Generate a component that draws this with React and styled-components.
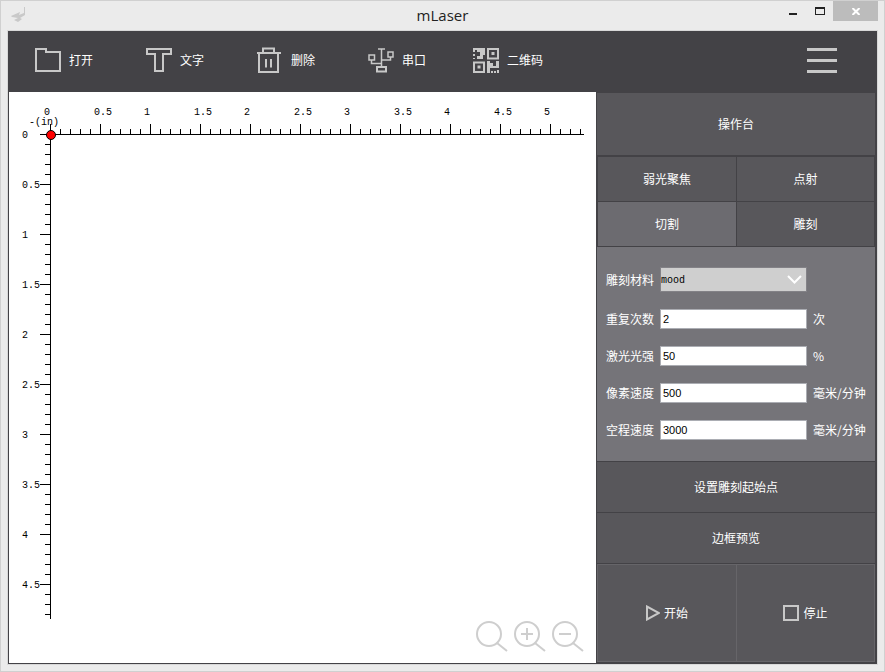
import React, { useState } from "react";
import styled, { createGlobalStyle } from "styled-components";

const c = {
  chrome: "#ebebeb",
  line: "#d0d0d0",
  dark: "#434246",
  panel: "#58575b",
  active: "#6c6b70",
  settings: "#757479",
  icon: "#c8c8c8",
  text: "#ffffff",
};

const GlobalStyle = createGlobalStyle`
  *, *::before, *::after { box-sizing: border-box; }
  body {
    margin: 0;
    background: ${c.chrome};
    font: 12px/16px "Noto Sans CJK SC", sans-serif;
  }
  button, input, select { font: inherit; margin: 0; border-radius: 0; }
  button { border: 0; padding: 0; background: none; color: inherit; cursor: pointer; }
  svg { display: block; flex: none; }
`;

const Window = styled.div`
  display: flex;
  flex-direction: column;
  min-height: 100vh;
  padding: 0 6px 6px;
  border: 1px solid ${c.line};
  background: ${c.chrome};
`;

const TitleBar = styled.header`
  display: grid;
  grid-template-columns: 1fr auto 1fr;
  height: 29px;
`;

const AppLogo = styled.div`
  padding: 6px 0 0 4px;
`;

const Title = styled.h1`
  margin: 0;
  font: 400 15px/28px "Open Sans", sans-serif;
  color: #222;
`;

const WindowControls = styled.div`
  display: flex;
  justify-content: flex-end;
  align-items: flex-start;
`;

const ControlButton = styled.button`
  display: grid;
  place-items: center;
  width: ${(p) => (p.$close ? 45 : 27)}px;
  height: 20px;
  background: ${(p) => (p.$close ? "#bcbcbc" : "transparent")};
`;

const Content = styled.div`
  flex: 1;
  display: flex;
  flex-direction: column;
  border: 1px solid #d8d8d8;
  background: ${c.dark};
  color: ${c.text};
`;

const Toolbar = styled.nav`
  display: flex;
  justify-content: space-between;
  height: 61px;
  padding: 0 40px 3px 27px;
`;

const ToolList = styled.div`
  display: grid;
  grid-template-columns: repeat(3, 111px) 105px auto;
  align-items: center;
`;

const ToolButton = styled.button`
  display: flex;
  align-items: center;
  gap: 8px;
  white-space: nowrap;
`;

const MenuButton = styled.button`
  display: flex;
  flex-direction: column;
  justify-content: center;
  gap: 8px;
`;

const MenuBar = styled.span`
  width: 30px;
  height: 3px;
  background: ${c.icon};
`;

const Workspace = styled.main`
  flex: 1;
  display: grid;
  grid-template-columns: minmax(0, 1fr) 281px;
  padding: 0 0 1px 1px;
`;

const Canvas = styled.section`
  display: flex;
  flex-direction: column;
  justify-content: space-between;
  overflow: hidden;
  background: #fff;
`;

const ZoomBar = styled.div`
  display: flex;
  justify-content: flex-end;
  gap: 6px;
  padding: 0 12px 11px;
`;

const SidePanel = styled.aside`
  display: flex;
  flex-direction: column;
  padding: 1px 2px 1px 1px;
`;

const PanelTitle = styled.h2`
  display: grid;
  place-items: center;
  height: 62px;
  margin: 0;
  font-size: 12px;
  font-weight: 400;
  background: ${c.panel};
`;

const ModeGrid = styled.div`
  display: grid;
  grid-template-columns: 138px 1fr;
  grid-auto-rows: 44px;
  gap: 1px;
  padding: 2px 1px 1px;
`;

const ModeButton = styled.button`
  background: ${(p) => (p.$active ? c.active : c.panel)};
`;

const Settings = styled.form`
  display: flex;
  flex-direction: column;
  gap: 17px;
  padding: 20px 8px 21px 9px;
  background: ${c.settings};
`;

const Field = styled.div`
  display: grid;
  grid-template-columns: 48px 147px 1fr;
  column-gap: 6px;
  align-items: center;
  white-space: nowrap;
`;

const SelectBox = styled.div`
  position: relative;
  height: 25px;
  svg {
    position: absolute;
    right: 5px;
    top: 8px;
    pointer-events: none;
  }
`;

const Select = styled.select`
  appearance: none;
  width: 100%;
  height: 100%;
  padding: 2px 0 0;
  border: 1px solid #838287;
  background: #cfcfcf;
  color: #000;
  font-family: "Liberation Mono", monospace;
  font-size: 10px;
`;

const NumberInput = styled.input`
  width: 100%;
  height: 20px;
  padding: 0 2px;
  border: 1px solid #abadb3;
  background: #fff;
  color: #000;
  font-family: "Liberation Sans", sans-serif;
  font-size: 11px;
`;

const WideButton = styled.button`
  height: 50px;
  margin-top: 1px;
  background: ${c.panel};
`;

const RunGrid = styled.div`
  flex: 1;
  display: grid;
  grid-template-columns: 138px 1fr;
  gap: 1px;
  margin-top: 1px;
  min-height: 98px;
  border: 1px solid #666569;
  background: #666569;
`;

const RunButton = styled.button`
  display: flex;
  align-items: center;
  justify-content: center;
  gap: 4px;
  background: ${c.panel};
`;

const RulerText = styled.text`
  font-family: "Liberation Mono", monospace;
  font-size: 10px;
  fill: #000;
`;

const Stroke = ({ width = 26, height = 26, children }) => (
  <svg width={width} height={height} viewBox={`0 0 ${width} ${height}`} fill="none" stroke={c.icon} strokeWidth="2" aria-hidden="true">
    {children}
  </svg>
);

const FolderIcon = () => (
  <Stroke>
    <path d="M1 2H11V5H25V24H1Z" />
  </Stroke>
);

const TextIcon = () => (
  <Stroke>
    <path d="M1 2H25V7H17V24H9V7H1Z" />
  </Stroke>
);

const TrashIcon = () => (
  <Stroke>
    <path d="M0 6H24M6 6V1.500H17V6M2 7V25H21V7" />
    <path d="M9 12V20.500M14 12V20.500" />
  </Stroke>
);

const UsbIcon = () => (
  <Stroke>
    <path strokeWidth="1.500" d="M10 2H17M13.500 2V19M3.500 13V16.500H13.500M22.500 10V13H13.500" />
    <path strokeWidth="1.500" d="M1 8H6.500V13H1ZM20 5H25V10H20Z" />
    <path d="M9 20H18V24.500H9Z" />
  </Stroke>
);

const QrIcon = () => (
  <Stroke>
    <path d="M15 2H25V11.500H15ZM1 15.500H11V25H1Z" />
    <path fill={c.icon} stroke="none" d="M18.500 5H21.500V8H18.500ZM4.500 18.500H7.500V21.500H4.500ZM0 1H12V8H10V12H4V9H7V5H4V3H2V5H0ZM0 7H2V9H0ZM0 11H2V12H0ZM14 14H17V16H20V19H23V14H26V21H17V26H14ZM18 24H20V26H18ZM21 24H23V26H21ZM24 23H26V26H24Z" />
  </Stroke>
);

const ZoomIcon = ({ sign }) => (
  <svg width="32" height="32" viewBox="0 0 32 32" fill="none" stroke="#cecece" strokeWidth="2" aria-hidden="true">
    <circle cx="13" cy="14" r="12" />
    <path d="M21 23L31 31" />
    {sign && <path d={sign} />}
  </svg>
);

const tools = [
  ["打开", FolderIcon],
  ["文字", TextIcon],
  ["删除", TrashIcon],
  ["串口", UsbIcon],
  ["二维码", QrIcon],
];

const fields = [
  ["repeat", "重复次数", "2", "次"],
  ["power", "激光光强", "50", "%"],
  ["speed", "像素速度", "500", "毫米/分钟"],
  ["travel", "空程速度", "3000", "毫米/分钟"],
];

const zooms = [
  ["适合窗口", null],
  ["放大", "M7 14H19M13 8V20"],
  ["缩小", "M7 14H19"],
];

const modes = ["弱光聚焦", "点射", "切割", "雕刻"];

const ORIGIN = { x: 41, y: 42 };
const STEP = 10;

function Ruler() {
  const ticks = (count) => Array.from({ length: count }, (_, i) => i);
  const size = (i) => (i % 5 === 0 ? 10 : 5);
  const across = ticks(54)
    .map((i) => `M${ORIGIN.x + i * STEP + 0.5} ${ORIGIN.y}v${-size(i)}`)
    .join("");
  const down = ticks(49)
    .map((i) => `M${ORIGIN.x} ${ORIGIN.y + i * STEP + 0.5}h${-size(i)}`)
    .join("");
  return (
    <svg width="587" height="527" viewBox="0 0 587 527" role="img" aria-label="标尺">
      <path d={`M31 42.5H575M41.5 32V527${across}${down}`} stroke="#000" fill="none" />
      {ticks(11).map((i) => (
        <RulerText key={i} x={35 + i * 50} y={23}>{i / 2}</RulerText>
      ))}
      {ticks(10).map((i) => (
        <RulerText key={i} x={13} y={46 + i * 50}>{i / 2}</RulerText>
      ))}
      <RulerText x={20} y={33}>-(in)</RulerText>
      <circle cx="42" cy="43" r="4.5" fill="#f00" stroke="#000" />
    </svg>
  );
}

export default function App() {
  const [mode, setMode] = useState("切割");
  return (
    <>
      <GlobalStyle />
      <Window>
        <TitleBar>
          <AppLogo>
            <svg width="16" height="16" viewBox="0 0 16 16" aria-hidden="true">
              <path d="M0 9L9 5L8 8L13 6V0H14V8L9 11L11 12L7 15L3 13L7 11L1 10Z" fill="#c9c9c9" />
            </svg>
          </AppLogo>
          <Title>mLaser</Title>
          <WindowControls>
            <ControlButton aria-label="最小化">
              <svg width="10" height="10" viewBox="0 0 10 10"><path d="M1 7H9V9H1Z" fill="#222" /></svg>
            </ControlButton>
            <ControlButton aria-label="最大化">
              <svg width="10" height="8" viewBox="0 0 10 8"><path d="M0 0H10V8H0ZM1 2V7H9V2Z" fill="#222" fillRule="evenodd" /></svg>
            </ControlButton>
            <ControlButton $close aria-label="关闭">
              <svg width="8" height="7" viewBox="0 0 8 7"><path d="M0.500 0L7.500 7M7.500 0L0.500 7" stroke="#fff" strokeWidth="2" /></svg>
            </ControlButton>
          </WindowControls>
        </TitleBar>
        <Content>
          <Toolbar>
            <ToolList>
              {tools.map(([label, Icon]) => (
                <ToolButton key={label}><Icon />{label}</ToolButton>
              ))}
            </ToolList>
            <MenuButton aria-label="菜单"><MenuBar /><MenuBar /><MenuBar /></MenuButton>
          </Toolbar>
          <Workspace>
            <Canvas>
              <Ruler />
              <ZoomBar>
                {zooms.map(([label, sign]) => (
                  <button key={label} aria-label={label}><ZoomIcon sign={sign} /></button>
                ))}
              </ZoomBar>
            </Canvas>
            <SidePanel>
              <PanelTitle>操作台</PanelTitle>
              <ModeGrid>
                {modes.map((m) => (
                  <ModeButton key={m} $active={m === mode} onClick={() => setMode(m)}>{m}</ModeButton>
                ))}
              </ModeGrid>
              <Settings>
                <Field>
                  <label htmlFor="material">雕刻材料</label>
                  <SelectBox>
                    <Select id="material"><option>mood</option></Select>
                    <svg width="15" height="9" viewBox="0 0 15 9" fill="none" stroke="#fff" strokeWidth="2"><path d="M1 1L7.500 7.500L14 1" /></svg>
                  </SelectBox>
                </Field>
                {fields.map(([id, label, value, unit]) => (
                  <Field key={id}>
                    <label htmlFor={id}>{label}</label>
                    <NumberInput id={id} defaultValue={value} />
                    <span>{unit}</span>
                  </Field>
                ))}
              </Settings>
              <WideButton>设置雕刻起始点</WideButton>
              <WideButton>边框预览</WideButton>
              <RunGrid>
                <RunButton>
                  <Stroke width={14} height={16}><path d="M1 1.500V14.500L13 8Z" /></Stroke>
                  开始
                </RunButton>
                <RunButton>
                  <Stroke width={16} height={16}><path d="M1 1H15V15H1Z" /></Stroke>
                  停止
                </RunButton>
              </RunGrid>
            </SidePanel>
          </Workspace>
        </Content>
      </Window>
    </>
  );
}
